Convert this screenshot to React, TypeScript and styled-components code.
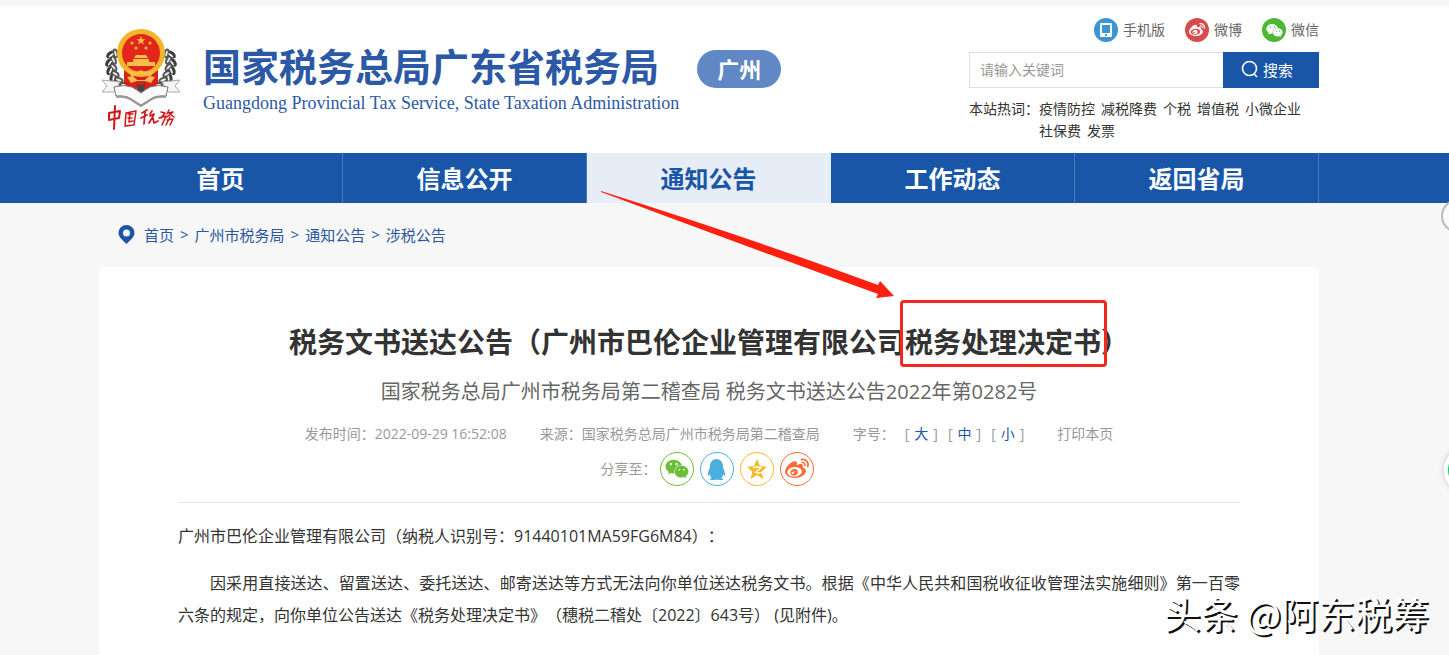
import React from "react";
import styled, { createGlobalStyle } from "styled-components";
import { FaWeixin, FaWeibo, FaQq } from "react-icons/fa";

const BLUE = "#1a56a8";

const GlobalStyle = createGlobalStyle`
  * { box-sizing: border-box; }
  body {
    margin: 0;
    background: #f7f7f7;
    color: #333;
    font-family: "Open Sans", "Noto Sans CJK SC", sans-serif;
    font-size: 14px;
    text-spacing-trim: space-all;
    overflow: hidden;
  }
  a { color: inherit; text-decoration: none; }
  button, input { font: inherit; }
`;

const Page = styled.div`
  position: relative;
  min-height: 100vh;
  overflow: hidden;
`;

const Container = styled.div`
  width: 1220px;
  max-width: 100%;
  margin: 0 auto;
`;

const Band = styled.div`
  padding-right: 31px;
`;

const HeaderBand = styled(Band)`
  background: #fff;
  border-top: 6px solid #f7f7f7;
`;

const HeaderRow = styled(Container)`
  display: flex;
  justify-content: space-between;
  height: 147px;
`;

const Brand = styled.div`
  display: flex;
  padding-top: 20px;
`;

const Emblem = styled.svg`
  width: 84px;
  height: 108px;
  flex: none;
`;

const Names = styled.div`
  padding: 16px 0 0 20px;
  color: #2c59a5;
`;

const BrandName = styled.div`
  font-size: 38px;
  line-height: 48px;
  font-weight: 700;
  white-space: nowrap;
`;

const BrandEnglish = styled.div`
  font-family: "Liberation Serif", serif;
  font-size: 18px;
  line-height: 26px;
  white-space: nowrap;
`;

const City = styled.a`
  width: 84px;
  height: 38px;
  margin: 24px 0 0 18px;
  border-radius: 19px;
  background: #5f88c4;
  color: #fff;
  font-size: 22px;
  line-height: 38px;
  font-weight: 700;
  text-align: center;
`;

const Tools = styled.div`
  width: 350px;
  padding-top: 12px;
`;

const Social = styled.div`
  display: flex;
  justify-content: flex-end;
  gap: 20px;
`;

const SocialLink = styled.a`
  display: flex;
  align-items: center;
  gap: 5px;
  height: 24px;
  line-height: 22px;
  color: #666;
`;

const Dot = styled.span<{ $color: string }>`
  display: flex;
  align-items: center;
  justify-content: center;
  width: 24px;
  height: 24px;
  border-radius: 50%;
  background: ${(p) => p.$color};
  color: #fff;
`;

const Search = styled.form`
  display: flex;
  height: 36px;
  margin-top: 10px;
`;

const SearchBox = styled.input`
  flex: 1;
  min-width: 0;
  padding: 0 10px 2px;
  border: 1px solid #ddd;
  border-right: 0;
  background: #fff;
  outline: 0;
  &::placeholder { color: #999; opacity: 1; }
`;

const SearchButton = styled.button`
  display: flex;
  align-items: center;
  justify-content: center;
  gap: 4px;
  width: 96px;
  padding: 0 8px 2px 0;
  border: 0;
  background: ${BLUE};
  color: #fff;
  font-size: 15px;
`;

const HotWords = styled.div`
  display: flex;
  padding-top: 10px;
  line-height: 22px;
`;

const HotLabel = styled.span`
  flex: none;
  width: 70px;
`;

const HotList = styled.div`
  display: flex;
  flex-wrap: wrap;
  column-gap: 6px;
`;

const NavBand = styled(Band)`
  background: ${BLUE};
`;

const Nav = styled(Container).attrs({ as: "nav" })`
  display: flex;
`;

const NavItem = styled.a<{ $active?: boolean }>`
  flex: 1;
  height: 50px;
  border-right: 1px solid ${(p) => (p.$active ? "#e7edf6" : "#4778b9")};
  background: ${(p) => (p.$active ? "#e7edf6" : BLUE)};
  color: ${(p) => (p.$active ? BLUE : "#fff")};
  font-size: 24px;
  line-height: 52px;
  font-weight: 700;
  text-align: center;
`;

const Crumbs = styled(Container).attrs({ as: "nav" })`
  display: flex;
  align-items: center;
  gap: 6px;
  height: 64px;
  padding: 0 0 2px 19px;
  color: #2a58a0;
  font-size: 15px;
`;

const Pin = styled.svg`
  width: 17px;
  height: 19px;
  margin-right: 3px;
`;

const Article = styled(Container).attrs({ as: "article" })`
  min-height: 400px;
  padding: 51px 79px 0;
  border-radius: 6px 6px 0 0;
  background: #fff;
`;

const Title = styled.h1`
  margin: 0;
  font-size: 28px;
  line-height: 48px;
  font-weight: 700;
  text-align: center;
  white-space: nowrap;
`;

const Marked = styled.span`
  position: relative;
`;

const MarkBox = styled.span`
  position: absolute;
  inset: -23px -6px -6px -5px;
  border: 3px solid #f0281e;
  border-radius: 4px;
`;

const Subtitle = styled.h2`
  margin: 0;
  padding-top: 11px;
  color: #666;
  font-size: 20px;
  line-height: 30px;
  font-weight: 400;
  text-align: center;
`;

const Meta = styled.div`
  display: flex;
  justify-content: center;
  padding-top: 16px;
  color: #999;
  line-height: 22px;
  gap: 33px;
  white-space: nowrap;
`;

const Sizes = styled.span`
  display: flex;
  gap: 10px;
`;

const SizeButton = styled.button`
  padding: 0 5px;
  border: 0;
  background: none;
  color: ${BLUE};
`;

const Share = styled.div`
  display: flex;
  align-items: center;
  justify-content: center;
  gap: 3px;
  height: 48px;
  padding-right: 4px;
  color: #999;
`;

const ShareLabel = styled.span`
  padding-bottom: 3px;
`;

const ShareLinks = styled.div`
  display: flex;
  gap: 6px;
`;

const ShareLink = styled.a<{ $color: string }>`
  display: flex;
  align-items: center;
  justify-content: center;
  width: 34px;
  height: 34px;
  border: 1px solid ${(p) => p.$color};
  border-radius: 50%;
  color: ${(p) => p.$color};
`;

const Body = styled.div`
  margin-top: 9px;
  padding-top: 17px;
  border-top: 1px solid #e5e5e5;
  font-size: 16px;
  line-height: 32px;
`;

const Paragraph = styled.p<{ $indent?: boolean }>`
  margin: 0 0 15px;
  text-align: justify;
  text-indent: ${(p) => (p.$indent ? "2em" : "0")};
`;

const Arrow = styled.svg`
  position: absolute;
  top: 186px;
  left: calc(50% - 125px);
  width: 300px;
  height: 116px;
`;

const FloatRing = styled.div`
  position: absolute;
  top: 199px;
  right: -26px;
  width: 34px;
  height: 34px;
  border: 2px solid #bbb;
  border-radius: 50%;
  background: #fafafa;
`;

const FloatChat = styled.div`
  position: absolute;
  top: 446px;
  right: -43px;
  width: 48px;
  height: 48px;
  border: 4px solid #fff;
  border-radius: 50%;
  background: #17c964;
  box-shadow: 0 0 6px rgba(0, 0, 0, 0.2);
`;

const Signature = styled.div`
  position: absolute;
  right: 20px;
  bottom: 32px;
  color: #fff;
  font-family: "Noto Sans CJK SC", sans-serif;
  font-size: 37px;
  line-height: 44px;
  text-shadow: 2px 2px 0 #111;
`;

const WEIBO = "#ff6a35";

function EmblemMark() {
  const leaves = [0, 1, 2, 3, 4, 5, 6, 7, 8];
  return (
    <Emblem viewBox="0 0 84 108" role="img" aria-label="中国税务">
      {[1, -1].map((side) => (
        <g key={side} transform={side === 1 ? undefined : "translate(84 0) scale(-1 1)"}>
          {leaves.map((n) => {
            const a = ((78 + n * 15) * Math.PI) / 180;
            const x = 42 + Math.cos(a) * 32;
            const y = 38 + Math.sin(a) * 31;
            return (
              <g key={n} transform={`translate(${x} ${y}) rotate(${78 + n * 15})`}>
                <ellipse rx="3" ry="5" transform="rotate(35)" fill="#3c3c3c" />
                <ellipse cx="-5" rx="3" ry="5" transform="rotate(-30)" fill="#555" />
                <ellipse cx="-1" rx="1" ry="3" transform="rotate(35)" fill="#f4f4f4" />
                <ellipse cx="-5" rx="1" ry="3" transform="rotate(-30)" fill="#eee" />
              </g>
            );
          })}
        </g>
      ))}
      <path d="M25 42h34v16q-17 12-34 0z" fill="#d9201a" />
      <circle cx="42" cy="27" r="24" fill="#f3b52c" />
      <circle cx="42" cy="27" r="19" fill="#e3261c" />
      <path d="m42 10 1.200 3.200h3.400l-2.700 2.100 1 3.300-2.900-2-2.900 2 1-3.300-2.700-2.100h3.400z" fill="#f5c04a" />
      <g fill="#f5c04a">
        <circle cx="33" cy="17" r="1.500" /><circle cx="51" cy="17" r="1.500" />
        <circle cx="37" cy="22" r="1.500" /><circle cx="47" cy="22" r="1.500" />
        <path d="M37 29h10l2 3H35zM34 33h16v3h6v4H28v-4h6zM29 44q7 4 13 0 6 4 13 0l-3 6q-6 0-10-2-4 2-10 2z" />
        <path d="m28 51 6-1 4 4h8l4-4 6 1-4 6-6-2h-8l-6 2z" />
      </g>
      <path d="m38 57 4 3 4-3-1 8h-6z" fill="#444" />
      <path d="m3 54 18 2-6 10H3l5-6zM81 54l-18 2 6 10h12l-5-6z" fill="#f5f5f5" stroke="#aaa" />
      <path d="M15 61q10-3 18 0 5 3 9 6 4-3 9-6 8-3 18 0l-2 9q-11-1-17 4l-8 5-8-5q-6-5-17-4z" fill="#fafafa" stroke="#777" />
      <path d="M17 71q11-1 17 4l8 5 8-5q6-5 17-4" fill="none" stroke="#999" strokeWidth="2" />
      <g fill="none" stroke="#d2151b" strokeWidth="2" strokeLinecap="round" strokeLinejoin="round">
        <path d="M10 87v7l10-2 1-7zM16 80l-1 23" />
        <path d="M27 87l-1 13 9-1 2-14zM29 88h5M29 92h4M31 86l-1 10 4-1" strokeWidth="1.500" />
        <path d="m43 87 5-3M46 86l-1 12M42 92l6-3M53 85l-2 3M51 90l4-2-2 4-3 5M54 92l1 5 4-2" strokeWidth="1.700" />
        <path d="m62 86 4 1-4 5M60 92l7-2-4 9M70 84l-2 4M69 87l5-1-6 5M71 88l4 3M68 94l6-1-3 6M71 91l-4 8" strokeWidth="1.500" />
      </g>
    </Emblem>
  );
}

export default function App() {
  return (
    <>
      <GlobalStyle />
      <Page>
        <HeaderBand as="header">
          <HeaderRow>
            <Brand>
              <EmblemMark />
              <Names>
                <BrandName>国家税务总局广东省税务局</BrandName>
                <BrandEnglish>Guangdong Provincial Tax Service, State Taxation Administration</BrandEnglish>
              </Names>
              <City href="#city">广州</City>
            </Brand>
            <Tools>
              <Social>
                <SocialLink href="#mobile">
                  <Dot $color="#3f94d6">
                    <svg width="12" height="14" viewBox="0 0 12 14">
                      <path fill="currentColor" fillRule="evenodd" d="M1 0h10a1 1 0 0 1 1 1v12a1 1 0 0 1-1 1H1a1 1 0 0 1-1-1V1a1 1 0 0 1 1-1zm1 2v8h8V2zm3 9v2h2v-2z" />
                    </svg>
                  </Dot>
                  手机版
                </SocialLink>
                <SocialLink href="#weibo"><Dot $color="#d94b4b"><FaWeibo size={16} /></Dot>微博</SocialLink>
                <SocialLink href="#weixin"><Dot $color="#4db833"><FaWeixin size={17} /></Dot>微信</SocialLink>
              </Social>
              <Search onSubmit={(e) => e.preventDefault()}>
                <SearchBox aria-label="请输入关键词" placeholder="请输入关键词" />
                <SearchButton type="submit">
                  <svg width="18" height="18" viewBox="0 0 18 18" fill="none" stroke="currentColor" strokeWidth="1.600">
                    <circle cx="8.500" cy="8.500" r="7" /><path d="m13 14 3 3" />
                  </svg>
                  搜索
                </SearchButton>
              </Search>
              <HotWords>
                <HotLabel>本站热词：</HotLabel>
                <HotList>
                  {["疫情防控", "减税降费", "个税", "增值税", "小微企业", "社保费", "发票"].map((w) => (
                    <a href="#hot" key={w}>{w}</a>
                  ))}
                </HotList>
              </HotWords>
            </Tools>
          </HeaderRow>
        </HeaderBand>
        <NavBand>
          <Nav>
            {["首页", "信息公开", "通知公告", "工作动态", "返回省局"].map((t) => (
              <NavItem href="#nav" key={t} $active={t === "通知公告"}>{t}</NavItem>
            ))}
          </Nav>
        </NavBand>
        <Band>
          <Crumbs>
            <Pin viewBox="0 0 17 19">
              <path fill={BLUE} fillRule="evenodd" d="M8.500 0a8 8 0 0 1 8 8c0 4-4 7-8 11C4.500 15 .5 12 .5 8a8 8 0 0 1 8-8zm0 4.500a3.500 3.500 0 1 0 0 7 3.500 3.500 0 0 0 0-7z" />
            </Pin>
            <a href="#home">首页</a><span>&gt;</span>
            <a href="#gz">广州市税务局</a><span>&gt;</span>
            <a href="#notice">通知公告</a><span>&gt;</span>
            <a href="#tax">涉税公告</a>
          </Crumbs>
          <Article>
            <Title>
              税务文书送达公告（广州市巴伦企业管理有限公司<Marked>税务处理决定书<MarkBox /></Marked>）
            </Title>
            <Subtitle>国家税务总局广州市税务局第二稽查局 税务文书送达公告2022年第0282号</Subtitle>
            <Meta>
              <span>发布时间：2022-09-29 16:52:08</span>
              <span>来源：国家税务总局广州市税务局第二稽查局</span>
              <Sizes>
                字号：
                {["大", "中", "小"].map((s) => (
                  <span key={s}>[<SizeButton type="button">{s}</SizeButton>]</span>
                ))}
              </Sizes>
              <a href="#print">打印本页</a>
            </Meta>
            <Share>
              <ShareLabel>分享至：</ShareLabel>
              <ShareLinks>
                <ShareLink href="#wx" aria-label="微信" $color="#6cbd37"><FaWeixin size={24} /></ShareLink>
                <ShareLink href="#qq" aria-label="QQ" $color="#4aaee0"><FaQq size={21} /></ShareLink>
                <ShareLink href="#qzone" aria-label="QQ空间" $color="#f6b92e">
                  <svg width="22" height="22" viewBox="0 0 22 22">
                    <path fill="currentColor" d="m11 1 3 7 7 .7-5.300 5 1.600 7.300L11 17l-6.300 4 1.600-7.300L1 8.700 8 8z" />
                    <path d="M7 9.500q4-1 8 0l-5.500 5q3 1 6.500 0" fill="none" stroke="#fff" strokeWidth="1.300" />
                  </svg>
                </ShareLink>
                <ShareLink href="#wb" aria-label="微博" $color={WEIBO}><FaWeibo size={24} /></ShareLink>
              </ShareLinks>
            </Share>
            <Body>
              <Paragraph>广州市巴伦企业管理有限公司（纳税人识别号：91440101MA59FG6M84）：</Paragraph>
              <Paragraph $indent>
                因采用直接送达、留置送达、委托送达、邮寄送达等方式无法向你单位送达税务文书。根据《中华人民共和国税收征收管理法实施细则》第一百零六条的规定，向你单位公告送达《税务处理决定书》（穗税二稽处〔2022〕643号） (见附件)。
              </Paragraph>
            </Body>
          </Article>
        </Band>
        <Arrow viewBox="0 0 300 116" aria-hidden="true">
          <path d="M1 5Q150 52 278 99l2-4 14 15-18 2 2-4Q140 58 1 6z" fill="#ff2010" />
        </Arrow>
        <FloatRing />
        <FloatChat />
        <Signature>头条 @阿东税筹</Signature>
      </Page>
    </>
  );
}
